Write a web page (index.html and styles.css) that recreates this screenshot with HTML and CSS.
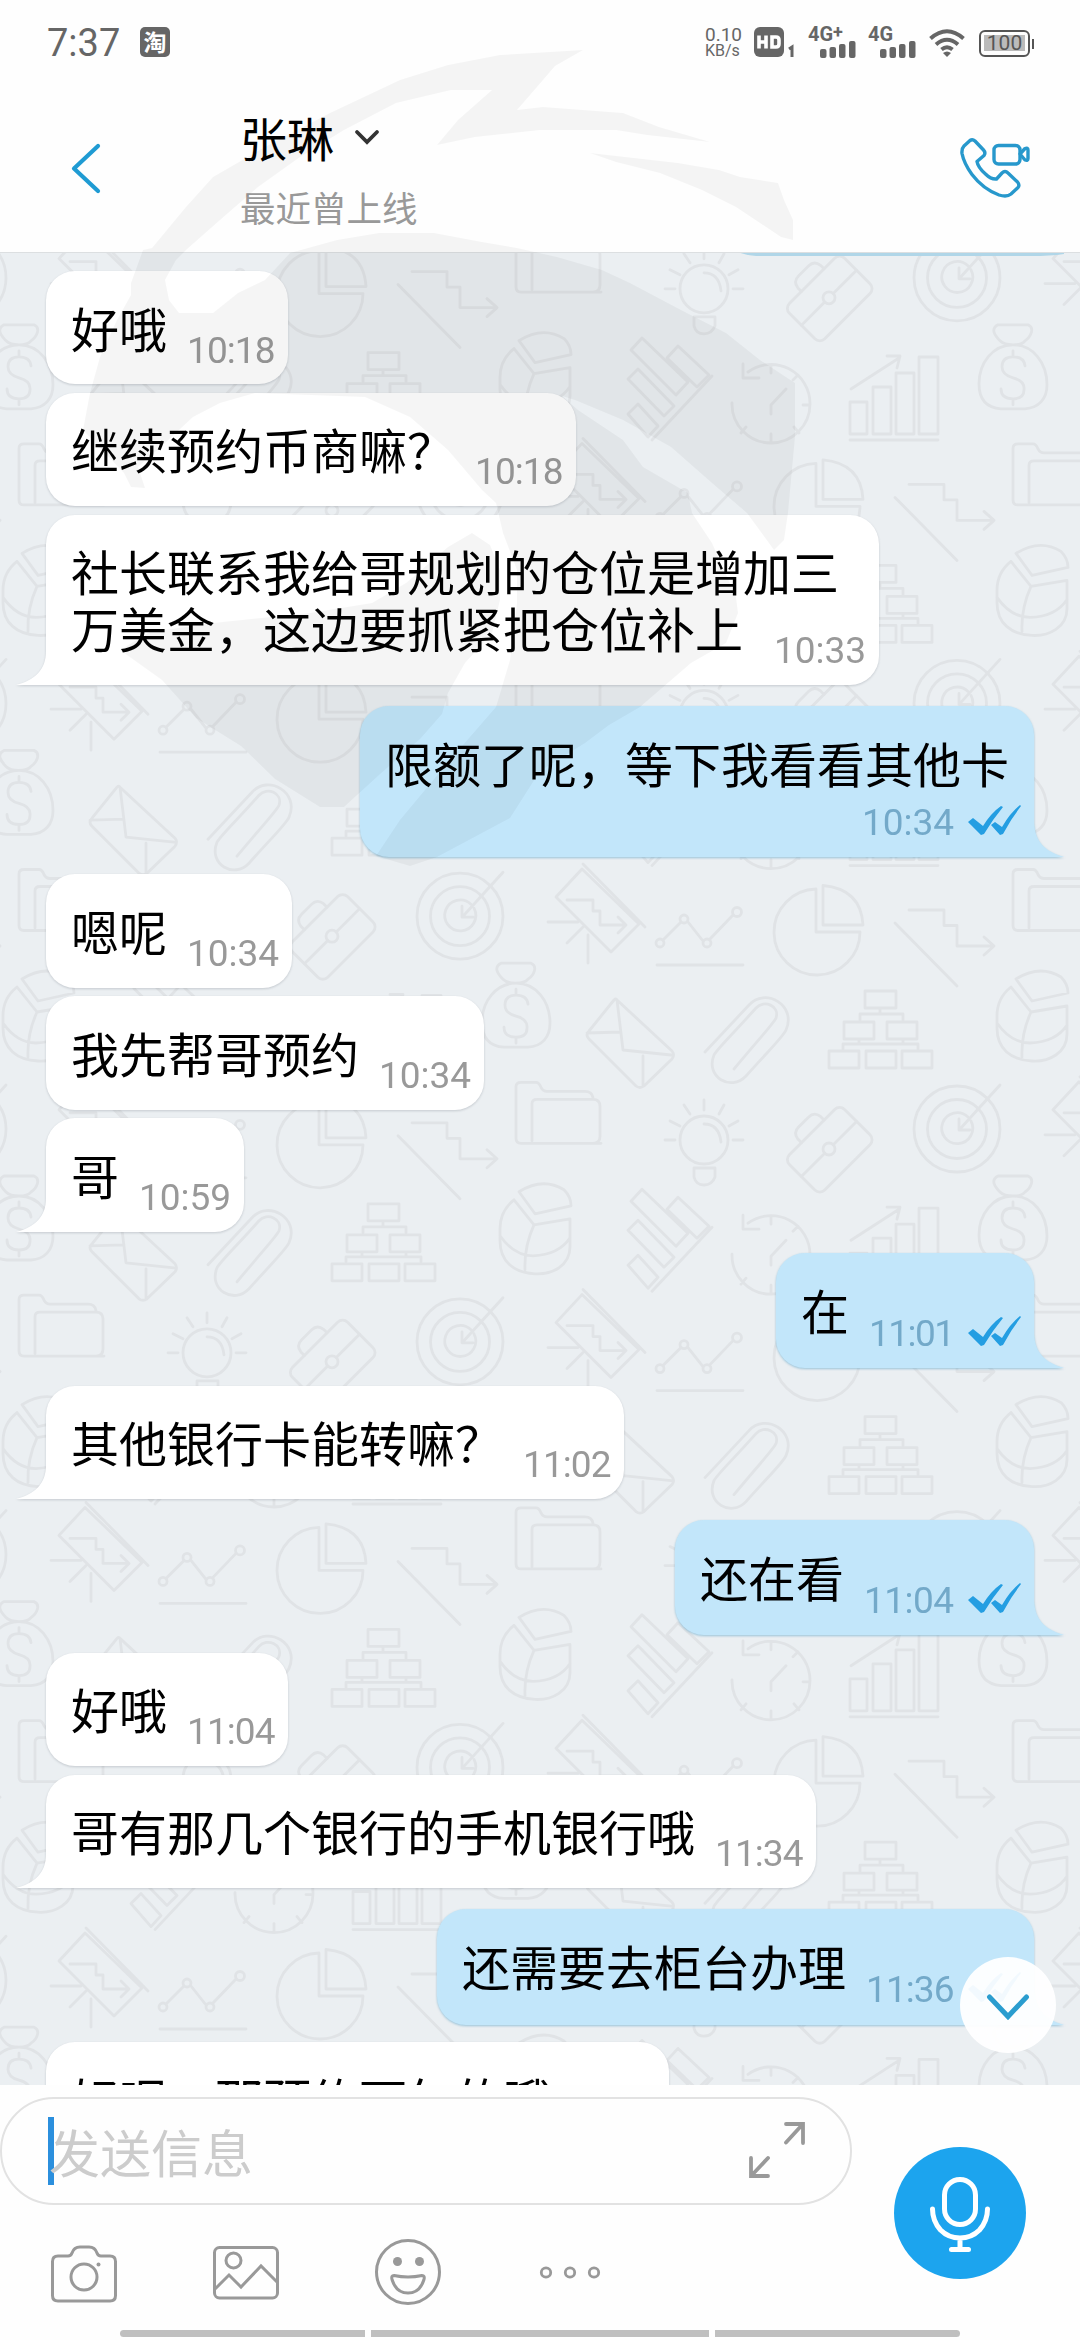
FILE: index.html
```html
<!DOCTYPE html>
<html lang="zh-CN">
<head>
<meta charset="utf-8">
<title>张琳</title>
<link rel="stylesheet" href="styles.css">
</head>
<body>
<div class="screen">
  <div class="status">
    <span class="clock">7:37</span>
    <span class="app-badge">淘</span>
    <div class="status-right">
      <div class="speed"><span class="speed-num">0.10</span><span class="speed-unit">KB/s</span></div>
      <svg class="hd" width="42" height="30" viewBox="0 0 42 30"><rect width="30" height="30" rx="6" fill="#666"/><path d="M5 8.500v13M12 8.500v13M5 15h7M18 10h4q3 0 3 3v4q0 3-3 3h-4z" fill="none" stroke="#fff" stroke-width="3.600"/><path d="M35 22l3-2v10" fill="none" stroke="#666" stroke-width="3"/></svg>
      <div class="signal signal-plus"><span>4G<sup>+</sup></span><svg width="36" height="17" viewBox="0 0 36 17" fill="#666"><rect x="0" y="8" width="6.500" height="9" rx="2"/><rect x="9.500" y="6" width="6.500" height="11" rx="2"/><rect x="19" y="3" width="6.500" height="14" rx="2"/><rect x="29" y="0" width="6.500" height="17" rx="2"/></svg></div>
      <div class="signal"><span>4G</span><svg width="36" height="17" viewBox="0 0 36 17" fill="#666"><rect x="0" y="8" width="6.500" height="9" rx="2"/><rect x="9.500" y="6" width="6.500" height="11" rx="2"/><rect x="19" y="3" width="6.500" height="14" rx="2"/><rect x="29" y="0" width="6.500" height="17" rx="2"/></svg></div>
      <svg class="wifi" width="36" height="28" viewBox="0 0 36 28"><path d="M1.500 9.500Q18-5 34.500 9.500M7 15.500Q18 6 29 15.500M12.500 20.500Q18 16 23.500 20.500" fill="none" stroke="#666" stroke-width="4"/><path d="M14 24q4-3 8 0l-4 4z" fill="#666"/></svg>
      <div class="battery"><span>100</span></div>
    </div>
  </div>

  <header class="header">
    <svg class="back" width="32" height="52" viewBox="0 0 32 52"><path d="M28 4L4 26.500 28 49" fill="none" stroke="#1f9bd3" stroke-width="4.200" stroke-linecap="round" stroke-linejoin="round"/></svg>
    <div class="peer">
      <div class="peer-name">张琳<svg width="26" height="16" viewBox="0 0 26 16"><path d="M3 3l10 10L23 3" fill="none" stroke="#333" stroke-width="3.800" stroke-linecap="round"/></svg></div>
      <div class="peer-state">最近曾上线</div>
    </div>
    <svg class="call" width="76" height="66" viewBox="956 135 76 66" fill="none" stroke="#2798cc" stroke-width="3.400" stroke-linejoin="round" stroke-linecap="round"><path d="M970 140.500q2.500-1.800 5 .5l8.500 9q2.500 2.800.5 5.500l-7 6q1 6 8.500 12.500 5.500 5.500 11 5l5.500-6q3-3 6 0l9.500 9q2.500 3 .5 5.500l-7 6.500q-4 3.500-12 1-16-6-27-20.500-8-11-10-21-.5-5 2-7.500z"/><rect x="994" y="145.500" width="26" height="18.500" rx="4.500"/><path d="M1020 154l5-5.500q3-1 3 1.500v8.500q0 2.500-3 1.500z"/></svg>
  </header>

  <main class="chat">
    <svg class="wallpaper" width="1080" height="1833" viewBox="0 252 1080 1833">
      <defs>
        <g id="motif" fill="none" stroke="#e0e3e6" stroke-width="2.800" stroke-linejoin="round" stroke-linecap="round">
          <!-- pie chart -->
          <path d="M816 889A43 43 0 1 0 860 932H816zM823 885.500V925H863Q861 889 823 885.500z"/>
          <!-- falling stairs -->
          <path d="M909 910h35v15.500h13V946h37M984 937l10 9-10 9M895 923l62 63"/>
          <!-- folder -->
          <path d="M1098 930.500H1018q-5 0-5-5V874q0-4.500 5-4.500h15q3 0 5 5 2 4 6 4H1082q7 0 8 6.500M1029 928V891q0-4.500 5-4.500h56q7 0 7 7v30q0 7-7 7"/>
          <!-- segmented cylinder -->
          <path d="M1016 979q24-15 45-2 7 7 7 16l-36 8zM1011 987l20 25q-10 22-9 45M1031 1012l36-6v28c0 19-18 28-35 27-21-1-35-12-35-33v-12q0-18 14-29M997 1023q14 20 33 20 26-1 37-18"/>
          <!-- org chart -->
          <path d="M865 991h31v17h-31zM844 1022h30v17h-30zM887 1022h30v17h-30zM829 1051h30v17h-30zM866 1051h30v17h-30zM902 1051h30v17h-30zM880 1008v6M860 1020v-6h43v6M859 1039v5M903 1039v5M843 1049v-5h75v5"/>
          <!-- target -->
          <circle cx="957" cy="1129" r="43"/><circle cx="957" cy="1129" r="29.500"/><path d="M968 1117a15.500 15.500 0 1 0 3 4M959 1119v11h11M960 1129L1000 1085"/>
          <!-- money bag -->
          <path d="M1000 1192c-5-5-10-12-2-16h30c7 3 3 12-3 16q-3 4-12 4t-13-4M1013 1196c-20 0-34 18-34 39 0 15 7 24 22 25h24c14-1 22-10 22-24 0-22-14-40-34-40zM1025 1217q-1-9-12-9t-11 10q0 8 11 11 12 3 11 12 0 9-11 9-12 0-12-10M1013 1202v6M1013 1250v6"/>
          <!-- clock with arrow -->
          <path d="M732 403a39 39 0 0 0 39 40 39 39 0 0 0 39-39 39 39 0 0 0-62-32M743 364v14h16M771 414v-9l15-16M771 366v7M771 434v8M803 405h7M746 427l-5 6M794 427l5 6M793 380l5-5"/>
          <!-- growing bars -->
          <path d="M850 402h17v32h-17zM873 387h18v47h-18zM896 373h18v61h-18zM919 357h19v77h-19zM850 440h88M851 389l48-31M887 356h13l-3 12"/>
          <!-- briefcase -->
          <g transform="translate(829 1149) rotate(-45)"><rect x="-39" y="-24" width="78" height="50" rx="7"/><path d="M-39 0H-6M6 0H39M-15-24v-5q1-8 9-8H8q8 0 9 8v5"/><circle cx="0" cy="0" r="6"/></g>
          <!-- light bulb -->
          <circle cx="704" cy="1140" r="24"/><path d="M704 1124q15 0 17 18M694 1168v9q2 8 10 8t11-8v-9zM704 1100v10M684 1105l6 9M724 1105l-5 9M670 1121l10 5M738 1121l-9 5M665 1140h10M733 1140h10"/>
          <!-- paper clip -->
          <path d="M705 1052l44-47c16-18 48 0 37 25-3 7-16 19-40 46-15 16-41 1-32-21 3-6 18-20 42-47 8-9 24-2 20 10-2 5-12 15-42 51"/>
          <!-- envelope -->
          <path d="M617 1000l55 51q3 4 0 8l-28 27q-4 3-8 0l-47-47q-4-4 0-8l25-31q2-2 3 0l6 50 48 5M587 1033l34-1M643 1056v30"/>
          <!-- line chart -->
          <path d="M663 940l18-18M688 922l15 19M710 939l23-24M657 965h86"/><circle cx="660" cy="943" r="4"/><circle cx="684" cy="919" r="4"/><circle cx="707" cy="943" r="4"/><circle cx="737" cy="912" r="4.500"/>
          <!-- presentation board -->
          <path d="M583 864l62 63M582 869l-26 28 55 55 28-28zM567 900h26v11h7v14h25M618 917l8 8-8 8M548 922h30M567 943l16-16M588 935v28"/>
          <!-- slanted bars -->
          <path d="M631 350l11-12 46 44-12 13zM667 358l11-12 31 29-12 12zM628 379l10-10 36 37-10 10zM628 414l10-10 20 22-10 11zM652 440l60-64"/>
        </g>
        <g id="column">
          <use href="#motif" y="-1702.400"/><use href="#motif" y="-1276.800"/><use href="#motif" y="-851.200"/><use href="#motif" y="-425.600"/><use href="#motif"/><use href="#motif" y="425.600"/><use href="#motif" y="851.200"/><use href="#motif" y="1276.800"/><use href="#motif" y="1702.400"/>
        </g>
      </defs>
      <use href="#column" x="-994" y="-425.600"/>
      <use href="#column" x="-497" y="-212.800"/>
      <use href="#column"/>
      <use href="#column" x="497" y="212.800"/>
      <path d="M738 252H1064V254Q1050 256 1032 256H756Q746 255.500 738 252z" fill="#b0d6e8"/>
    </svg>

    <div class="messages">
      <div class="msg in"><p>好哦</p><time class="w90">10:18</time></div>
      <div class="msg in"><p>继续预约币商嘛？</p><time class="w90">10:18</time></div>
      <div class="msg in tail long"><p>社长联系我给哥规划的仓位是增加三<br>万美金，这边要抓紧把仓位补上</p><time class="w94">10:33</time><svg class="tip" viewBox="0 0 31 34"><path d="M30 0C30 19 19 29 0 34H31V0z"/></svg></div>

      <div class="msg out tail stacked"><p>限额了呢，等下我看看其他卡</p><div class="meta"><time class="w94">10:34</time><svg class="ticks" viewBox="0 0 53 31"><path d="M0 17l5-4 10 8Q23 8 33 1l2 1Q25 14 16 29l-3 1zM23 20l4-3 7 5Q42 8 52 0l1 1Q43 14 35 29l-3 1z"/></svg></div><svg class="tip" viewBox="0 0 31 34"><path d="M1 0C2 17 10 28 31 34H0V0z"/></svg></div>

      <div class="msg in turn"><p>嗯呢</p><time class="w94">10:34</time></div>
      <div class="msg in"><p>我先帮哥预约</p><time class="w94">10:34</time></div>
      <div class="msg in tail"><p>哥</p><time class="w94">10:59</time><svg class="tip" viewBox="0 0 31 34"><path d="M30 0C30 19 19 29 0 34H31V0z"/></svg></div>

      <div class="msg out tail"><p>在</p><div class="meta"><time class="w87">11:01</time><svg class="ticks" viewBox="0 0 53 31"><path d="M0 17l5-4 10 8Q23 8 33 1l2 1Q25 14 16 29l-3 1zM23 20l4-3 7 5Q42 8 52 0l1 1Q43 14 35 29l-3 1z"/></svg></div><svg class="tip" viewBox="0 0 31 34"><path d="M1 0C2 17 10 28 31 34H0V0z"/></svg></div>

      <div class="msg in turn tail"><p>其他银行卡能转嘛？</p><time class="w90">11:02</time><svg class="tip" viewBox="0 0 31 34"><path d="M30 0C30 19 19 29 0 34H31V0z"/></svg></div>

      <div class="msg out tail"><p>还在看</p><div class="meta"><time class="w92">11:04</time><svg class="ticks" viewBox="0 0 53 31"><path d="M0 17l5-4 10 8Q23 8 33 1l2 1Q25 14 16 29l-3 1zM23 20l4-3 7 5Q42 8 52 0l1 1Q43 14 35 29l-3 1z"/></svg></div><svg class="tip" viewBox="0 0 31 34"><path d="M1 0C2 17 10 28 31 34H0V0z"/></svg></div>

      <div class="msg in turn"><p>好哦</p><time class="w90">11:04</time></div>
      <div class="msg in tail"><p>哥有那几个银行的手机银行哦</p><time class="w90">11:34</time><svg class="tip" viewBox="0 0 31 34"><path d="M30 0C30 19 19 29 0 34H31V0z"/></svg></div>

      <div class="msg out tail"><p>还需要去柜台办理</p><div class="meta"><time class="w90">11:36</time><svg class="ticks" viewBox="0 0 53 31"><path d="M0 17l5-4 10 8Q23 8 33 1l2 1Q25 14 16 29l-3 1zM23 20l4-3 7 5Q42 8 52 0l1 1Q43 14 35 29l-3 1z"/></svg></div><svg class="tip" viewBox="0 0 31 34"><path d="M1 0C2 17 10 28 31 34H0V0z"/></svg></div>

      <div class="msg in turn cut"><p>好呢，那预约下午的哦</p></div>
    </div>

    <div class="to-bottom"><svg width="48" height="32" viewBox="0 0 48 32"><path d="M5.500 6L24 25.500 42.500 6" fill="none" stroke="#2b9dcf" stroke-width="5" stroke-linecap="round"/></svg></div>
  </main>

  <footer class="composer">
    <div class="composer-left">
      <div class="field">
        <span class="caret"></span><span class="placeholder">发送信息</span>
        <svg class="expand" width="58" height="58" viewBox="0 0 58 58" fill="none" stroke="#999" stroke-width="3.800" stroke-linecap="round"><path d="M38 3h17v19M54 4L38 21.500M3 37v18h17M4 54l16-17"/></svg>
      </div>
      <div class="tools">
        <svg width="68" height="68" viewBox="50 2238 68 68" fill="none" stroke="#999" stroke-width="3"><path d="M58 2256h10q3 0 4-3 2-6 8-6h9q6 0 8 6 1 3 4 3h9q5.500 0 5.500 5.500v34q0 5.500-5.500 5.500H58q-5.500 0-5.500-5.500v-34q0-5.500 5.500-5.500z"/><circle cx="84" cy="2277" r="13"/><circle cx="98.500" cy="2264.500" r="2" fill="#999" stroke="none"/></svg>
        <svg width="68" height="68" viewBox="212 2238 68 68" fill="none" stroke="#999" stroke-width="3"><rect x="214.500" y="2247.500" width="63" height="50.500" rx="5"/><circle cx="233.500" cy="2260.500" r="7.500"/><path d="M215 2289l14-14 12 12 20-21 16 16"/></svg>
        <svg width="68" height="68" viewBox="374 2238 68 68" fill="none" stroke="#999" stroke-width="3"><circle cx="408" cy="2272" r="31.500"/><circle cx="397.500" cy="2261.500" r="4.500" fill="#999" stroke="none"/><circle cx="419.500" cy="2261.500" r="4.500" fill="#999" stroke="none"/><path d="M394 2275.500q14 3 28 0 3 0 2 4-4 13.500-16 13.500t-16-13.500q-1-4 2-4z"/></svg>
        <svg width="68" height="68" viewBox="536 2238 68 68" fill="none" stroke="#999" stroke-width="2.800"><circle cx="546" cy="2272.500" r="4.700"/><circle cx="570" cy="2272.500" r="4.700"/><circle cx="594" cy="2272.500" r="4.700"/></svg>
      </div>
    </div>
    <div class="mic"><svg width="66" height="80" viewBox="927 2174 66 80" fill="none" stroke="#fff" stroke-width="5" stroke-linecap="round"><rect x="944.500" y="2179.500" width="31" height="45" rx="15.500"/><path d="M932.500 2209q0 12 8 21 8 8 19.500 8t19.500-8q8-9 8-21M960 2239v10.500M951.500 2249.500h17"/></svg></div>
  </footer>

  <div class="gesture"><i></i><i></i><i></i></div>

  <!-- translucent emblem laid over the whole screen -->
  <svg class="emblem" width="1080" height="2340" viewBox="0 0 1080 2340" fill="#000" fill-opacity=".038">
    <path d="M143 250L152 248 186 207 213 177 265 147 330 113 400 80 448 65 500 55 583 50 555 66 543 80 517 110 543 107 623 113 659 127 710 142 647 135 616 130 540 130 475 137 437 145 458 120 492 90 451 90 396 103 344 130 300 157 258 187 220 220 186 250 176 260 165 280 169 300 179 313 213 313 238 293 265 280 290 253 337 240 379 233 434 233 482 242 517 248 557 257 602 270 630 283 681 310 726 333 760 360 795 383 795 437 788 513 784 540 774 550 747 513 712 483 671 447 623 420 575 400 562 396 578 410 623 440 643 467 688 493 692 513 712 543 736 597 738 613 726 643 691 663 640 707 609 725 585 743 540 771 510 818 437 857 410 866 376 856 400 820 450 760 496 707 510 660 517 603 517 570 503 533 496 503 482 490 448 450 410 417 365 397 255 393 220 403 193 417 165 443 138 467 145 488 131 487 124 473 83 430 90 393 100 357 117 320 131 295 131 283z"/>
    <path d="M590 153L678 163 719 170 740 177 778 183 784 200 793 220 793 240 781 237 760 223 736 207 702 190 660 173 616 162z"/>
    <path d="M120 650L150 632 213 623 310 613 372 603 406 583 448 547 472 533 490 545 500 570 500 600 492 633 465 663 448 693 442 714 420 739 379 775 344 807 320 807 275 779 241 746 196 718 162 680z"/>
  </svg>
</div>
</body>
</html>
```
FILE: styles.css
```css
* { box-sizing: border-box; }

body {
  margin: 0;
  background: #fff;
  font-family: "Noto Sans CJK SC", sans-serif;
}

svg { display: block; flex: none; }

.screen {
  position: relative;
  display: flex;
  flex-direction: column;
  width: 1080px;
  height: 2340px;
  overflow: hidden;
  background: #fefefe;
}

/* status bar */
.status {
  display: flex;
  align-items: flex-start;
  height: 84px;
  padding: 27px 47px 0 47px;
  color: #666;
  font-family: Roboto, sans-serif;
}

.clock {
  width: 93px;
  margin-top: 1px;
  font-size: 38px;
  line-height: 30px;
}

.app-badge {
  width: 30px;
  height: 30px;
  border-radius: 5px;
  background: #666;
  color: #fff;
  font: 700 23px/29px "Noto Sans CJK SC", sans-serif;
  text-align: center;
}

.status-right {
  display: flex;
  align-items: flex-start;
  margin-left: auto;
}

.speed {
  display: flex;
  flex-direction: column;
  width: 49px;
}

.speed-num { font-size: 19px; line-height: 15px; }
.speed-unit { font-size: 16px; line-height: 18px; }

.signal {
  display: flex;
  flex-direction: column;
  width: 48px;
  margin-right: 13px;
  font-size: 20px;
  font-weight: 700;
  line-height: 14px;
}

.signal svg { align-self: flex-end; }
.signal sup { font-size: 18px; line-height: 0; vertical-align: 3px; }
.signal-plus { margin: 0 12px; }

.wifi { margin-top: 2px; }

.battery {
  position: relative;
  width: 51px;
  height: 27px;
  margin: 3px 3px 0 14px;
  padding: 3px;
  border: 2.5px solid #555;
  border-radius: 6px;
}

.battery span {
  display: block;
  height: 16px;
  background: #bbb;
  color: #555;
  font-size: 21px;
  line-height: 17px;
  text-align: center;
}

.battery::after {
  content: "";
  position: absolute;
  top: 7px;
  right: -6px;
  width: 2px;
  height: 10px;
  background: #555;
}

/* conversation header */
.header {
  display: flex;
  height: 168px;
  padding: 0 48px 0 70px;
}

.back { margin-top: 58px; }

.peer { margin: 21px auto 0 138px; }

.peer-name {
  display: flex;
  align-items: center;
  gap: 16px;
  height: 64px;
  color: #000;
  font-size: 47px;
  line-height: 64px;
}

.peer-name svg { margin: 0 0 0 4px; }

.peer-state {
  margin-top: 16px;
  color: #999;
  font-size: 35.5px;
  line-height: 44px;
}

.call { margin-top: 51px; }

/* message area */
.chat {
  position: relative;
  height: 1833px;
  overflow: hidden;
  background: #ebeff2;
  border-top: 1px solid #dcdfe1;
}

.wallpaper {
  position: absolute;
  top: -1px;
  left: 0;
}

.messages {
  position: relative;
  display: flex;
  flex-direction: column;
  align-items: flex-start;
  padding: 18px 46px 0;
}

.msg {
  position: relative;
  display: flex;
  align-items: flex-end;
  gap: 18px;
  padding: 27.5px 13px 28.8px 25px;
  border-radius: 29px;
  filter: drop-shadow(0 1px 1px rgba(60, 70, 80, .22));
}

.in { background: #fff; fill: #fff; }
.in + .in { margin-top: 8.7px; }
.out + .in { margin-top: 17.5px; }

.out {
  align-self: flex-end;
  margin-top: 21px;
  padding: 28px 13px 30.5px 25px;
  background: #c2e6fa;
  fill: #c2e6fa;
  filter: drop-shadow(0 1.5px 1px rgba(70, 150, 190, .5));
}

.in.tail { border-bottom-left-radius: 0; }
.out.tail { border-bottom-right-radius: 0; }

.tip {
  position: absolute;
  bottom: 0;
  width: 31px;
  height: 34px;
}

.in .tip { left: -30px; }
.out .tip { right: -30px; }

.msg p {
  margin: 0;
  color: #000;
  font-size: 48px;
  line-height: 57px;
  white-space: nowrap;
}

.msg time {
  height: 38px;
  margin-bottom: -14px;
  padding-left: 2px;
  color: #999;
  font: 400 37px/38px Roboto, sans-serif;
  white-space: nowrap;
}

.w94 { width: 94px; }
.w92 { width: 92px; letter-spacing: -.5px; }
.w90 { width: 90px; letter-spacing: -.9px; }
.w87 { width: 87px; letter-spacing: -1.5px; }

.long time { margin-left: -85px; }

.meta {
  display: flex;
  gap: 14px;
  margin-bottom: -15px;
}

.out .meta time { margin: 0; color: #73a9c9; }

.ticks {
  width: 53px;
  height: 31px;
  margin-top: 1px;
  fill: #249ee2;
}

.stacked {
  flex-direction: column;
  gap: 12.5px;
  padding-bottom: 15px;
}

.stacked p { margin-right: 12px; }
.stacked .meta { margin: 0; }

.cut { padding-right: 118px; }

.to-bottom {
  position: absolute;
  top: 1704px;
  left: 960px;
  display: flex;
  align-items: center;
  justify-content: center;
  width: 96px;
  height: 96px;
  border-radius: 50%;
  background: rgba(255, 255, 255, .94);
}

.to-bottom svg { margin-top: 4px; }

/* composer */
.composer {
  display: flex;
  height: 245px;
  padding-top: 12px;
}

.composer-left { width: 852px; }

.field {
  display: flex;
  align-items: center;
  height: 108px;
  padding: 0 44px 0 46px;
  border: 2px solid #e2e2e2;
  border-radius: 54px;
}

.caret {
  width: 6px;
  height: 68px;
  margin-right: -5px;
  background: #2b8fdd;
}

.placeholder {
  color: #ccc;
  font-size: 51px;
  line-height: 70px;
}

.expand { margin-left: auto; margin-top: -2px; }

.tools {
  display: flex;
  gap: 94px;
  padding: 33px 0 0 50px;
}

.mic {
  display: flex;
  align-items: center;
  justify-content: center;
  width: 132px;
  height: 132px;
  margin: 50px 0 0 42px;
  border-radius: 50%;
  background: #1ca4ee;
}

.mic svg { margin-top: 2px; }

.gesture {
  display: flex;
  gap: 6px;
  height: 7px;
  padding: 0 120px;
}

.gesture i { width: 245px; background: #bfbfbf; }
.gesture i:nth-child(2) { width: 338px; }
.gesture i:first-child { border-radius: 4px 0 0 4px; }
.gesture i:last-child { border-radius: 0 4px 4px 0; }

.emblem {
  position: absolute;
  top: 0;
  left: 0;
  pointer-events: none;
}
```
